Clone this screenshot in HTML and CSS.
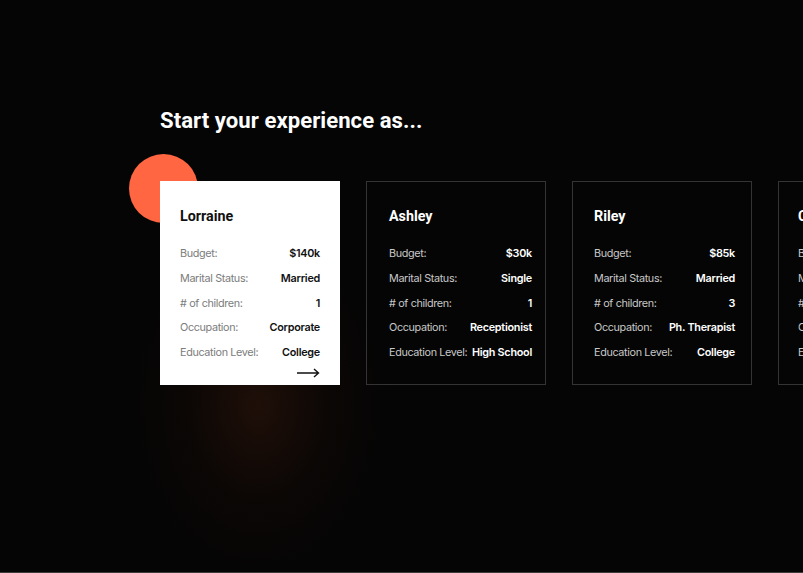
FILE: index.html
```html
<!DOCTYPE html>
<html lang="en">
<head>
<meta charset="utf-8">
<title>Start your experience as...</title>
<link rel="stylesheet" href="styles.css">
</head>
<body>
<main class="page">
  <h1 class="title">Start your experience as...</h1>
  <div class="cards">
    <span class="dot"></span>
    <div class="card card--active">
      <h2 class="name">Lorraine</h2>
      <dl class="rows">
        <div class="row"><dt>Budget:</dt><dd>$140k</dd></div>
        <div class="row"><dt>Marital Status:</dt><dd>Married</dd></div>
        <div class="row"><dt># of children:</dt><dd>1</dd></div>
        <div class="row"><dt>Occupation:</dt><dd>Corporate</dd></div>
        <div class="row"><dt>Education Level:</dt><dd>College</dd></div>
      </dl>
      <div class="arrow">
        <svg width="23" height="10" viewBox="0 0 23 10"><path d="M0 5H21.5M17 1L21.5 5L17 9" fill="none" stroke="#111" stroke-width="1.4"/></svg>
      </div>
    </div>
    <div class="card card--dark">
      <h2 class="name">Ashley</h2>
      <dl class="rows">
        <div class="row"><dt>Budget:</dt><dd>$30k</dd></div>
        <div class="row"><dt>Marital Status:</dt><dd>Single</dd></div>
        <div class="row"><dt># of children:</dt><dd>1</dd></div>
        <div class="row"><dt>Occupation:</dt><dd>Receptionist</dd></div>
        <div class="row"><dt>Education Level:</dt><dd>High School</dd></div>
      </dl>
    </div>
    <div class="card card--dark card--riley">
      <h2 class="name">Riley</h2>
      <dl class="rows">
        <div class="row"><dt>Budget:</dt><dd>$85k</dd></div>
        <div class="row"><dt>Marital Status:</dt><dd>Married</dd></div>
        <div class="row"><dt># of children:</dt><dd>3</dd></div>
        <div class="row"><dt>Occupation:</dt><dd>Ph. Therapist</dd></div>
        <div class="row"><dt>Education Level:</dt><dd>College</dd></div>
      </dl>
    </div>
    <div class="card card--dark card--edge">
      <h2 class="name">Carol</h2>
      <dl class="rows">
        <div class="row"><dt>Budget:</dt><dd>$60k</dd></div>
        <div class="row"><dt>Marital Status:</dt><dd>Single</dd></div>
        <div class="row"><dt># of children:</dt><dd>0</dd></div>
        <div class="row"><dt>Occupation:</dt><dd>Designer</dd></div>
        <div class="row"><dt>Education Level:</dt><dd>College</dd></div>
      </dl>
    </div>
  </div>
</main>
</body>
</html>
```

FILE: styles.css
```css
* { box-sizing: border-box; }
html, body { margin: 0; padding: 0; }
body {
  width: 803px;
  height: 573px;
  overflow: hidden;
  background: #050505;
  font-family: "Inter", "Liberation Sans", sans-serif;
}
.page {
  height: 573px;
  border-bottom: 1px solid #3c3c3c;
  padding: 107px 0 0 160px;
  background:
    radial-gradient(ellipse 130px 175px at 258px 405px, rgba(42, 19, 10, 0.7), rgba(22, 10, 5, 0.35) 55%, rgba(0, 0, 0, 0) 100%),
    #050505;
}
.title {
  margin: 0;
  font-family: "Roboto", "Liberation Sans", sans-serif;
  font-weight: 700;
  font-size: 22.1px;
  line-height: 26px;
  color: #fff;
  letter-spacing: 0.05px;
}
.cards {
  position: relative;
  z-index: 0;
  display: flex;
  gap: 26px;
  margin-top: 48px;
}
.dot {
  position: absolute;
  left: -31px;
  top: -27px;
  width: 69px;
  height: 69px;
  border-radius: 50%;
  background: #ff6641;
  z-index: -1;
}
.card {
  flex: 0 0 180px;
  min-width: 0;
  height: 204px;
  padding: 27px 20px 0 20px;
}
.card--active {
  background: #fff;
  color: #111;
}
.card--dark {
  border: 1px solid #343434;
  color: #fff;
  padding: 26px 13px 0 22px;
}
.card--riley { padding-right: 16px; padding-left: 21px; }
.card--edge { padding-left: 19px; }
.name {
  margin: 0;
  font-family: "Roboto", "Liberation Sans", sans-serif;
  font-weight: 700;
  font-size: 14.3px;
  line-height: 16px;
}
.rows {
  margin: 23px 0 0 0;
  display: flex;
  flex-direction: column;
  gap: 10.8px;
}
.row {
  display: flex;
  justify-content: space-between;
  align-items: center;
  gap: 4px;
  font-size: 10.8px;
  line-height: 14px;
  white-space: nowrap;
}
.row dt {
  margin: 0;
  color: #7c7c7c;
  letter-spacing: -0.35px;
}
.row dd {
  margin: 0;
  font-weight: 600;
  letter-spacing: -0.25px;
}
.card--dark .row dt { color: #c8c8c8; }
.card--dark .row dd { color: #fff; }
.arrow {
  display: flex;
  justify-content: flex-end;
  margin-top: 8px;
  height: 10px;
}
.arrow svg { display: block; }
```
